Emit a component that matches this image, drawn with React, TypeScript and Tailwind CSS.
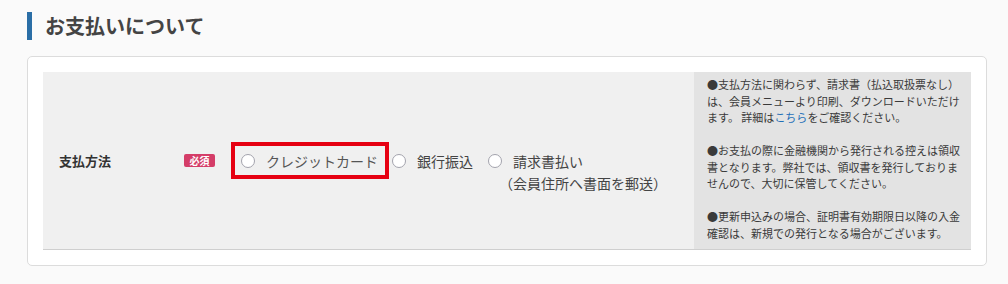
const Radio = () => (
    <span className="inline-block w-[14px] h-[14px] rounded-full border border-[#a3a3ad] bg-white shrink-0" />
);

const App = () => {
    return (
        <div
            className="w-full h-[284px] bg-[#fafafa] pt-[12px]"
            style={{ fontFamily: '"Noto Sans CJK JP", "Noto Sans", sans-serif' }}
        >
            {/* heading */}
            <div className="flex items-center ml-[27px]">
                <span className="w-[5px] h-[28px] bg-[#2a6ea6]" />
                <h2 className="ml-[13px] text-[20px] leading-[28px] font-bold text-[#444]">お支払いについて</h2>
            </div>

            {/* card */}
            <div className="mt-[16px] ml-[27px] w-[960px] bg-white border border-[#dcdcdc] rounded-[5px] p-[15px]">
                <div className="flex border-b border-[#cfcfcf]">
                    <div className="flex-1 bg-[#f0f0f0] flex items-center pl-[16px]">
                        <div className="w-[125px] text-[13px] font-bold text-[#333]">支払方法</div>
                        <span className="w-[31px] h-[13px] rounded-[2px] bg-[#d43d68] text-white text-[10px] leading-[13px] font-bold text-center">
                            必須
                        </span>

                        <div className="ml-[16px] flex items-center">
                            {/* highlighted option */}
                            <label className="w-[158px] h-[37px] border-4 border-[#e60012] flex items-center pl-[6px]">
                                <Radio />
                                <span className="ml-[11px] text-[14px] leading-[22px] text-[#555]">クレジットカード</span>
                            </label>

                            <label className="ml-[3px] flex items-center">
                                <Radio />
                                <span className="ml-[11px] text-[14px] leading-[22px] text-[#444]">銀行振込</span>
                            </label>

                            <div className="ml-[15px] flex flex-col">
                                <label className="flex items-center">
                                    <Radio />
                                    <span className="ml-[11px] text-[14px] leading-[22px] text-[#444]">請求書払い</span>
                                </label>
                                <span className="ml-[11px] -mb-[22px] text-[14px] leading-[22px] text-[#444] whitespace-nowrap">
                                    （会員住所へ書面を郵送）
                                </span>
                            </div>
                        </div>
                    </div>

                    {/* notes */}
                    <div className="w-[277px] bg-[#e3e3e3] pl-[13px] pt-[4px] pb-[8px] text-[11px] leading-[16.5px] text-[#3a3a3a] whitespace-nowrap">
                        <p>
                            ●支払方法に関わらず、請求書（払込取扱票なし）<br />
                            は、会員メニューより印刷、ダウンロードいただけ<br />
                            ます。 詳細は<a className="text-[#1f6fb8]">こちら</a>をご確認ください。
                        </p>
                        <p className="mt-[16.5px]">
                            ●お支払の際に金融機関から発行される控えは領収<br />
                            書となります。弊社では、領収書を発行しておりま<br />
                            せんので、大切に保管してください。
                        </p>
                        <p className="mt-[16.5px]">
                            ●更新申込みの場合、証明書有効期限日以降の入金<br />
                            確認は、新規での発行となる場合がございます。
                        </p>
                    </div>
                </div>
            </div>
        </div>
    );
};

export default App;
